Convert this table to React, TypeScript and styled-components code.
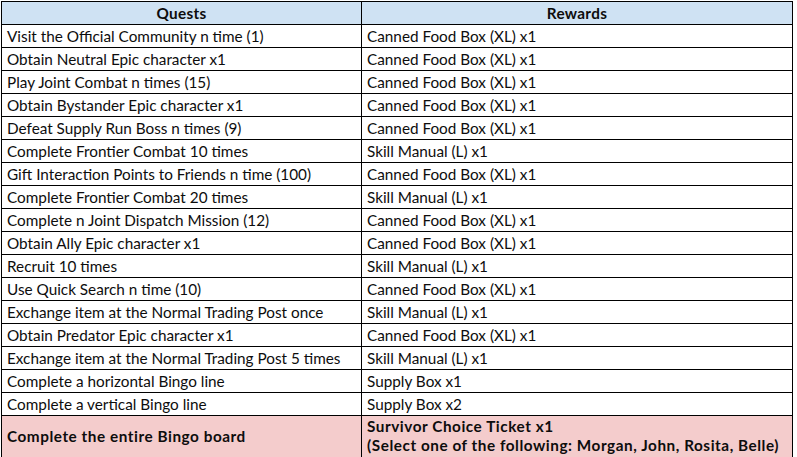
import styled, { createGlobalStyle } from "styled-components";

const GlobalStyle = createGlobalStyle`
  body {
    margin: 0;
    background: #ffffff;
    font-family: "Lato", "Open Sans", sans-serif;
  }
`;

const Page = styled.div`
  padding: 1px 0 0 1px;
`;

const Table = styled.table`
  width: 792px;
  border-collapse: collapse;
  table-layout: fixed;
  color: #0d0d0d;
  font-size: 15.3px;
`;

const HeadCell = styled.th`
  height: 22px;
  padding: 0 6px;
  border: 1px solid #000000;
  background: #cfe2f3;
  font-weight: 700;
  letter-spacing: 0.3px;
  text-align: center;
  line-height: 20px;
`;

const Cell = styled.td<{ $highlight?: boolean }>`
  height: ${(p) => (p.$highlight ? "40px" : "22px")};
  padding: ${(p) => (p.$highlight ? "0 5px 2px" : "0 5px")};
  border: 1px solid #000000;
  background: ${(p) => (p.$highlight ? "#f4cccc" : "#ffffff")};
  font-weight: ${(p) => (p.$highlight ? 700 : 400)};
  letter-spacing: ${(p) => (p.$highlight ? "0.55px" : "0")};
  line-height: 19px;
  white-space: nowrap;
  overflow: hidden;
`;

const rows: [string, string][] = [
  ["Visit the Official Community n time (1)", "Canned Food Box (XL) x1"],
  ["Obtain Neutral Epic character x1", "Canned Food Box (XL) x1"],
  ["Play Joint Combat n times (15)", "Canned Food Box (XL) x1"],
  ["Obtain Bystander Epic character x1", "Canned Food Box (XL) x1"],
  ["Defeat Supply Run Boss n times (9)", "Canned Food Box (XL) x1"],
  ["Complete Frontier Combat 10 times", "Skill Manual (L) x1"],
  ["Gift Interaction Points to Friends n time (100)", "Canned Food Box (XL) x1"],
  ["Complete Frontier Combat 20 times", "Skill Manual (L) x1"],
  ["Complete n Joint Dispatch Mission (12)", "Canned Food Box (XL) x1"],
  ["Obtain Ally Epic character x1", "Canned Food Box (XL) x1"],
  ["Recruit 10 times", "Skill Manual (L) x1"],
  ["Use Quick Search n time (10)", "Canned Food Box (XL) x1"],
  ["Exchange item at the Normal Trading Post once", "Skill Manual (L) x1"],
  ["Obtain Predator Epic character x1", "Canned Food Box (XL) x1"],
  ["Exchange item at the Normal Trading Post 5 times", "Skill Manual (L) x1"],
  ["Complete a horizontal Bingo line", "Supply Box x1"],
  ["Complete a vertical Bingo line", "Supply Box x2"],
];

export default function App() {
  return (
    <Page>
      <GlobalStyle />
      <Table>
        <colgroup>
          <col style={{ width: 360 }} />
          <col />
        </colgroup>
        <thead>
          <tr>
            <HeadCell>Quests</HeadCell>
            <HeadCell>Rewards</HeadCell>
          </tr>
        </thead>
        <tbody>
          {rows.map(([quest, reward], index) => (
            <tr key={index}>
              <Cell>{quest}</Cell>
              <Cell>{reward}</Cell>
            </tr>
          ))}
          <tr>
            <Cell $highlight>Complete the entire Bingo board</Cell>
            <Cell $highlight>
              Survivor Choice Ticket x1
              <br />
              (Select one of the following: Morgan, John, Rosita, Belle)
            </Cell>
          </tr>
        </tbody>
      </Table>
    </Page>
  );
}
